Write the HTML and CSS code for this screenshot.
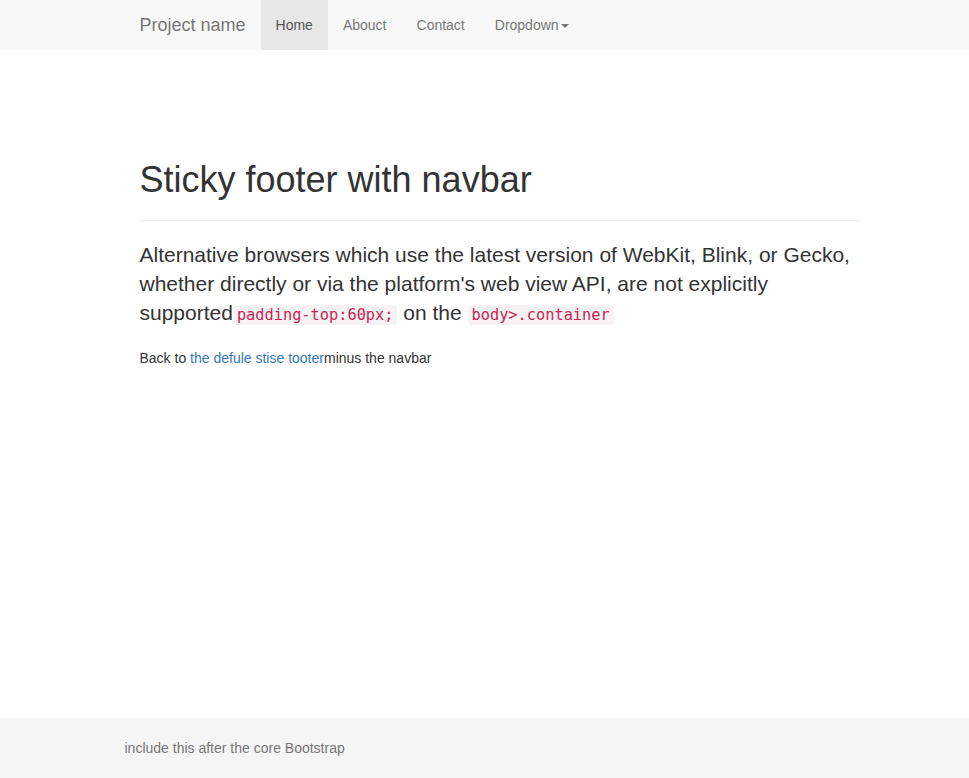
FILE: index.html
```html
<!DOCTYPE html>
<html>
  <head>
    <title>Sticky footer with navbar</title>
    <meta name="viewport" content="width=device-width, initial-scale=1" />
    <link rel="stylesheet" href="styles.css">
  </head>
  <body>
    <nav class="navbar">
      <div class="container navbar-inner">
        <a class="navbar-brand" href="#">Project name</a>
        <ul class="nav">
          <li class="active"><a href="#">Home</a></li>
          <li><a href="#">Abouct</a></li>
          <li><a href="#">Contact</a></li>
          <li><a href="#">Dropdown<span class="caret"></span></a></li>
        </ul>
      </div>
    </nav>

    <div class="container main">
      <div class="page-header">
        <h1>Sticky footer with navbar</h1>
      </div>
      <p class="lead">
        Alternative browsers which use the latest version of WebKit, Blink, or
        Gecko, whether directly or via the platform's web view API, are not
        explicitly supported<code>padding-top:60px;</code> on the
        <code>body&gt;.container</code>
      </p>
      <p>Back to <a href="#">the defule stise tooter</a>minus the navbar</p>
    </div>

    <footer class="footer">
      <div class="container">
        <p class="text-muted">include this after the core Bootstrap</p>
      </div>
    </footer>
  </body>
</html>
```

FILE: styles.css
```css
html,
body {
  margin: 0;
  padding: 0;
}

body {
  font-family: "Liberation Sans", Arial, sans-serif;
  font-size: 14px;
  line-height: 20px;
  color: #333;
  background: #fff;
  min-height: 100vh;
  display: flex;
  flex-direction: column;
}

a {
  color: #337ab7;
  text-decoration: none;
}

.container {
  width: 750px;
  margin: 0 auto;
  padding: 0 15px;
  box-sizing: border-box;
}

/* navbar */
.navbar {
  background: #f8f8f8;
  height: 50px;
}

.navbar-inner {
  display: flex;
  align-items: stretch;
  height: 50px;
}

.navbar-brand {
  font-size: 18px;
  line-height: 20px;
  padding: 15px;
  color: #777;
}

.nav {
  display: flex;
  list-style: none;
  margin: 0;
  padding: 0;
}

.nav li a {
  display: block;
  padding: 15px;
  line-height: 20px;
  color: #777;
}

.nav li.active a {
  background: #e7e7e7;
  color: #555;
}

.caret {
  display: inline-block;
  width: 0;
  height: 0;
  margin-left: 2px;
  vertical-align: middle;
  border-top: 4px solid #777;
  border-left: 4px solid transparent;
  border-right: 4px solid transparent;
}

/* main */
.main {
  flex: 1;
  padding: 110px 0 0 30px;
}

.page-header {
  padding-bottom: 20px;
  margin: 0 0 19px;
  border-bottom: 1px solid #eee;
}

h1 {
  font-size: 36px;
  font-weight: 500;
  line-height: 1.1;
  margin: 0;
}

p {
  margin: 0 0 10px;
}

.lead {
  font-size: 21px;
  line-height: 1.4;
  font-weight: 300;
  margin-bottom: 20px;
}

code {
  font-family: "DejaVu Sans Mono", Consolas, monospace;
  font-size: 15.3px;
  padding: 1px 4px;
  color: #c7254e;
  background: #f9f2f4;
  border-radius: 4px;
}

/* footer */
.footer {
  background: #f5f5f5;
  height: 60px;
}

.footer p {
  margin: 20px 0;
}

.text-muted {
  color: #777;
}
```
